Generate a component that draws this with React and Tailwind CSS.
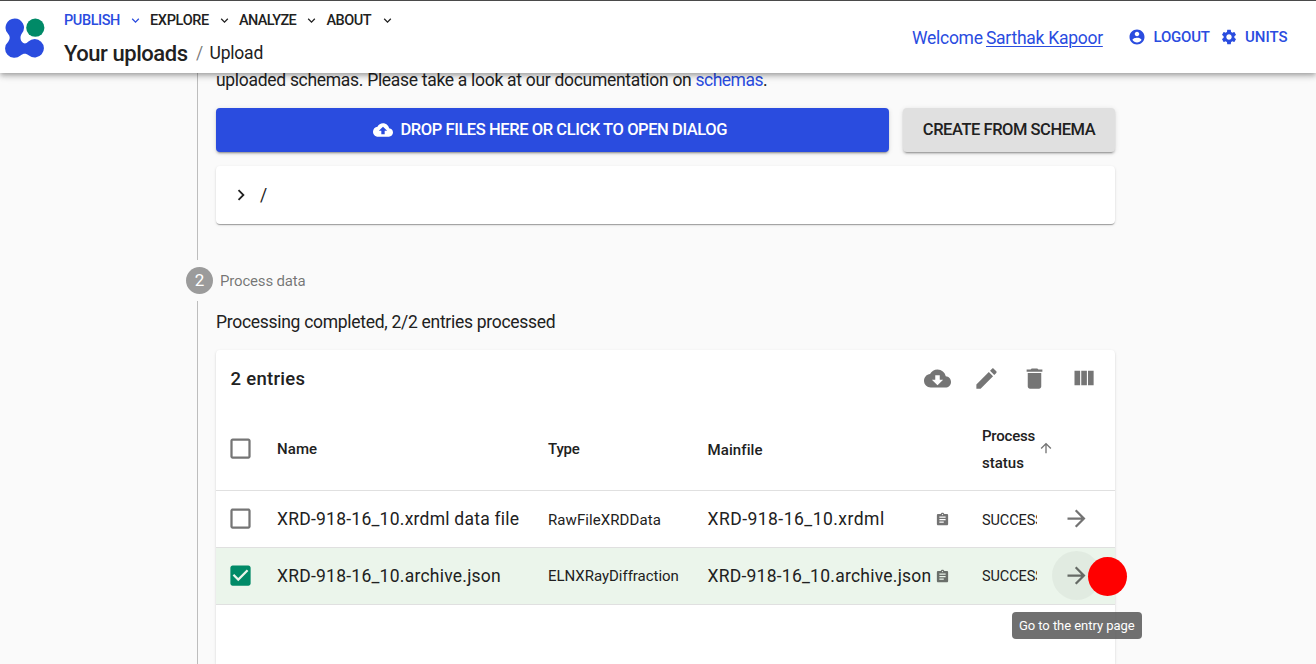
import React from "react";

const PATHS = {
  cloudUpload:
    "M19.35 10.04C18.67 6.59 15.64 4 12 4 9.11 4 6.6 5.64 5.35 8.04 2.34 8.36 0 10.91 0 14c0 3.31 2.69 6 6 6h13c2.76 0 5-2.24 5-5 0-2.64-2.05-4.78-4.65-4.96zM14 13v4h-4v-4H7l5-5 5 5h-3z",
  cloudDownload:
    "M19.35 10.04C18.67 6.59 15.64 4 12 4 9.11 4 6.6 5.64 5.35 8.04 2.34 8.36 0 10.91 0 14c0 3.31 2.69 6 6 6h13c2.76 0 5-2.24 5-5 0-2.64-2.05-4.78-4.65-4.96zM17 13l-5 5-5-5h3V9h4v4h3z",
  edit: "M3 17.25V21h3.75L17.81 9.94l-3.75-3.75L3 17.25zM20.71 7.04c.39-.39.39-1.02 0-1.41l-2.34-2.34c-.39-.39-1.02-.39-1.41 0l-1.83 1.83 3.75 3.75 1.83-1.83z",
  remove: "M6 19c0 1.1.9 2 2 2h8c1.1 0 2-.9 2-2V7H6v12zM19 4h-3.5l-1-1h-5l-1 1H5v2h14V4z",
  columns: "M10 18h5V5h-5v13zm-6 0h5V5H4v13zM16 5v13h5V5h-5z",
  account:
    "M12 2C6.48 2 2 6.48 2 12s4.48 10 10 10 10-4.48 10-10S17.52 2 12 2zm0 3c1.66 0 3 1.34 3 3s-1.34 3-3 3-3-1.34-3-3 1.34-3 3-3zm0 14.2c-2.5 0-4.71-1.28-6-3.22.03-1.99 4-3.08 6-3.08 1.99 0 5.97 1.09 6 3.08-1.29 1.94-3.5 3.22-6 3.22z",
  settings:
    "M19.14 12.94c.04-.3.06-.61.06-.94 0-.32-.02-.64-.07-.94l2.03-1.58c.18-.14.23-.41.12-.61l-1.92-3.32c-.12-.22-.37-.29-.59-.22l-2.39.96c-.5-.38-1.03-.7-1.62-.94l-.36-2.54c-.04-.24-.24-.41-.48-.41h-3.84c-.24 0-.43.17-.47.41l-.36 2.54c-.59.24-1.13.57-1.62.94l-2.39-.96c-.22-.08-.47 0-.59.22L2.74 8.87c-.12.21-.08.47.12.61l2.03 1.58c-.05.3-.09.63-.09.94s.02.64.07.94l-2.03 1.58c-.18.14-.23.41-.12.61l1.92 3.32c.12.22.37.29.59.22l2.39-.96c.5.38 1.03.7 1.62.94l.36 2.54c.05.24.24.41.48.41h3.84c.24 0 .44-.17.47-.41l.36-2.54c.59-.24 1.13-.56 1.62-.94l2.39.96c.22.08.47 0 .59-.22l1.92-3.32c.12-.22.07-.47-.12-.61l-2.01-1.58zM12 15.6c-1.98 0-3.6-1.62-3.6-3.6s1.62-3.6 3.6-3.6 3.6 1.62 3.6 3.6-1.62 3.6-3.6 3.6z",
  assignment:
    "M19 3h-4.18C14.4 1.84 13.3 1 12 1c-1.3 0-2.4.84-2.82 2H5c-1.1 0-2 .9-2 2v14c0 1.1.9 2 2 2h14c1.1 0 2-.9 2-2V5c0-1.1-.9-2-2-2zm-7 0c.55 0 1 .45 1 1s-.45 1-1 1-1-.45-1-1 .45-1 1-1zm2 14H7v-2h7v2zm3-4H7v-2h10v2zm0-4H7V7h10v2z",
  arrowForward: "M12 4l-1.41 1.41L16.17 11H4v2h12.17l-5.58 5.59L12 20l8-8z",
  arrowUp: "M4 12l1.41 1.41L11 7.83V20h2V7.83l5.58 5.59L20 12l-8-8-8 8z",
  expand: "M16.59 8.59L12 13.17 7.41 8.59 6 10l6 6 6-6z",
  chevronRight: "M10 6L8.59 7.41 13.17 12l-4.58 4.59L10 18l6-6z",
  box: "M19 5v14H5V5h14m0-2H5c-1.1 0-2 .9-2 2v14c0 1.1.9 2 2 2h14c1.1 0 2-.9 2-2V5c0-1.1-.9-2-2-2z",
  boxChecked:
    "M19 3H5c-1.11 0-2 .9-2 2v14c0 1.1.89 2 2 2h14c1.11 0 2-.9 2-2V5c0-1.1-.89-2-2-2zm-9 14l-5-5 1.41-1.41L10 14.17l7.59-7.59L19 8l-9 9z",
};

function Icon({ name, className }) {
  return (
    <svg viewBox="0 0 24 24" fill="currentColor" className={"shrink-0 " + className}>
      <path d={PATHS[name]} />
    </svg>
  );
}

function Logo() {
  return (
    <svg viewBox="0 0 40 40" className="h-10 w-10 shrink-0">
      <path
        fill="#2A4CDF"
        d="M9.7 .4A9.2 9.2 0 0 1 17 15.2C15.2 17.6 14.8 21.5 17 23.8C18.6 25.9 21 26.2 23.4 23.6A9.2 9.2 0 1 1 24 37.5C21 35.2 18.5 35.2 15.5 37.5A9.2 9.2 0 0 1 3.2 23.7C5.2 20.5 5.2 18.5 3.2 16A9.2 9.2 0 0 1 9.7 .4z"
      />
      <circle cx="30.3" cy="9.7" r="9.1" fill="#008A67" />
    </svg>
  );
}

function NavItem({ label, className }) {
  return (
    <div className={"flex items-center justify-between " + className}>
      <span>{label}</span>
      <Icon name="expand" className="h-[15px] w-[15px]" />
    </div>
  );
}

function Header() {
  return (
    <header className="relative z-10 flex h-[73px] items-center border-t border-[#4a4a4a] bg-white pl-[5px] pr-[29px] shadow-[0_2px_4px_-1px_rgba(0,0,0,0.2),0_4px_5px_0_rgba(0,0,0,0.14),0_1px_10px_0_rgba(0,0,0,0.12)]">
      <div className="mt-px">
        <Logo />
      </div>
      <div className="ml-[19px] flex h-full flex-col">
        <nav className="flex h-[38px] items-center pt-px text-[14.5px] font-medium">
          <NavItem label="PUBLISH" className="mr-[7px] w-[79px] tracking-[-0.42px] text-[#2A4CDF]" />
          <NavItem label="EXPLORE" className="mr-[7px] w-[82px] tracking-[-0.33px]" />
          <NavItem label="ANALYZE" className="mr-2 w-[79.5px] tracking-[-0.62px]" />
          <NavItem label="ABOUT" className="w-[68px] tracking-[-0.5px]" />
        </nav>
        <div className="flex h-[29px] items-center">
          <span className="w-[132px] text-[22px] font-medium tracking-[-0.45px]">Your uploads</span>
          <span className="w-[13.5px] text-[17.5px] text-black/55">/</span>
          <span className="text-[17.5px] tracking-[-0.2px]">Upload</span>
        </div>
      </div>
      <div className="ml-auto flex items-center text-[#2A4CDF]">
        <div className="mr-[25px] mt-0.5 flex gap-1 text-[17.5px] tracking-[-0.27px]">
          <span className="w-[70px]">Welcome</span>
          <span className="w-[117px] underline decoration-1 underline-offset-2">Sarthak Kapoor</span>
        </div>
        <div className="flex items-center text-[15px] font-medium">
          <Icon name="account" className="h-[18px] w-[18px]" />
          <span className="ml-[7.5px] w-[66px] tracking-[-0.2px]">LOGOUT</span>
          <Icon name="settings" className="h-[18px] w-[18px]" />
          <span className="ml-[7.5px] w-[42px]">UNITS</span>
        </div>
      </div>
    </header>
  );
}

const COLS = "grid grid-cols-[61px_271px_159.5px_229px_45.5px_55px_1fr] items-center";

function Row({ name, nameCls, type, typeCls, file, fileCls, statusCls, selected }) {
  return (
    <div className={COLS + " h-[57px] border-b border-[#e0e0e0] " + (selected ? "bg-[#ebf5eb]" : "bg-white")}>
      <Icon
        name={selected ? "boxChecked" : "box"}
        className={"-mt-px ml-[11px] h-[27px] w-[27px] " + (selected ? "text-[#008A67]" : "text-[#757575]")}
      />
      <span className={"text-[17.5px] " + nameCls}>{name}</span>
      <span className={"text-[15px] " + typeCls}>{type}</span>
      <span className={"text-[17.5px] " + fileCls}>{file}</span>
      <Icon name="assignment" className="-ml-[2px] mt-px h-[15px] w-[15px] text-black/55" />
      <span className={"overflow-hidden text-[14.5px] tracking-[-0.1px] " + statusCls}>SUCCESS</span>
      <span
        className={
          "-mt-px ml-[15px] flex h-[49px] w-[49px] items-center justify-center rounded-full text-black/55 " +
          (selected ? "bg-black/[0.04]" : "")
        }
      >
        <Icon name="arrowForward" className="h-[27px] w-[27px]" />
      </span>
    </div>
  );
}

const ELEVATION =
  "shadow-[0_2px_1px_-1px_rgba(0,0,0,0.2),0_1px_1px_0_rgba(0,0,0,0.14),0_1px_3px_0_rgba(0,0,0,0.12)]";
const RAISED =
  "shadow-[0_3px_1px_-2px_rgba(0,0,0,0.2),0_2px_2px_0_rgba(0,0,0,0.14),0_1px_5px_0_rgba(0,0,0,0.12)]";

export default function App() {
  return (
    <div className="relative flex h-[664px] w-[1316px] flex-col overflow-hidden whitespace-nowrap bg-[#fafafa] font-['Roboto',sans-serif] text-[#212121]">
      <Header />
      <main className="flex min-h-0 flex-1 flex-col">
        <section className="ml-[197px] h-[187px] w-[918px] shrink-0 border-l border-[#bdbdbd] pl-[18px]">
          <p className="-mt-[6px] h-[27px] text-[17.5px] leading-[27px] tracking-[-0.3px]">
            uploaded schemas. Please take a look at our documentation on{" "}
            <span className="tracking-[-0.5px] text-[#2A4CDF]">schemas</span>.
          </p>
          <div className="mt-[14px] flex gap-3.5">
            <button
              className={
                "flex h-11 w-[673px] items-center justify-center gap-[7.5px] rounded-[4px] bg-[#2A4CDF] pr-[5px] text-[16.5px] font-medium tracking-[-0.42px] text-white " +
                RAISED
              }
            >
              <Icon name="cloudUpload" className="h-5 w-5" />
              DROP FILES HERE OR CLICK TO OPEN DIALOG
            </button>
            <button
              className={
                "h-11 w-[212px] rounded-[4px] bg-[#e0e0e0] text-[16.5px] font-medium tracking-[-0.46px] " + RAISED
              }
            >
              CREATE FROM SCHEMA
            </button>
          </div>
          <div className={"mt-3.5 flex h-[58px] items-center rounded-[4px] bg-white pl-[13.5px] " + ELEVATION}>
            <Icon name="chevronRight" className="h-[22px] w-[22px]" />
            <span className="ml-[8.5px] text-[17.5px]">/</span>
          </div>
        </section>

        <div className="my-[7px] ml-[186px] flex h-[27px] shrink-0 items-center">
          <span className="flex h-[27px] w-[27px] items-center justify-center rounded-full bg-[#9b9b9b] text-[17px] text-white">
            2
          </span>
          <span className="ml-[7px] mt-px text-[15px] tracking-[-0.18px] text-black/55">Process data</span>
        </div>

        <section className="ml-[197px] flex w-[918px] flex-1 flex-col border-l border-[#bdbdbd] pl-[18px]">
          <p className="mt-[8px] h-[27px] text-[17.5px] leading-[27px] tracking-[-0.29px]">
            Processing completed, 2/2 entries processed
          </p>
          <div className={"mt-3.5 flex flex-1 flex-col rounded-t-[4px] bg-white " + ELEVATION}>
            <div className="flex h-[57px] items-center justify-between pl-[14.5px] pr-[18px]">
              <h2 className="mt-[3px] text-[18.5px] font-medium tracking-[0.3px]">2 entries</h2>
              <div className="flex gap-[21.7px] text-[#757575]">
                <Icon name="cloudDownload" className="h-[27px] w-[27px]" />
                <Icon name="edit" className="h-[27px] w-[27px]" />
                <Icon name="remove" className="h-[27px] w-[27px]" />
                <Icon name="columns" className="h-[27px] w-[27px]" />
              </div>
            </div>
            <div className={COLS + " h-[84px] border-b border-[#e0e0e0] text-[15px] font-medium"}>
              <Icon name="box" className="ml-[11px] h-[27px] w-[27px] text-[#757575]" />
              <span className="mt-0.5 tracking-[0.1px]">Name</span>
              <span className="mt-0.5 tracking-[-0.2px]">Type</span>
              <span className="mt-1 tracking-[0.1px]">Mainfile</span>
              <span />
              <span className="mt-0.5 leading-[27px] tracking-[-0.2px]">
                Process
                <br />
                <span className="tracking-normal">status</span>
              </span>
              <Icon name="arrowUp" className="-mt-px ml-[1px] h-4 w-4 text-black/55" />
            </div>
            <Row
              name="XRD-918-16_10.xrdml data file"
              nameCls="tracking-[0.24px]"
              type="RawFileXRDData"
              typeCls="mt-[3px] tracking-[0.08px]"
              file="XRD-918-16_10.xrdml"
              fileCls="tracking-[0.47px]"
              statusCls="mt-[3px]"
            />
            <Row
              name="XRD-918-16_10.archive.json"
              nameCls="tracking-[0.24px]"
              type="ELNXRayDiffraction"
              typeCls="tracking-[-0.03px]"
              file="XRD-918-16_10.archive.json"
              fileCls="tracking-[0.24px]"
              statusCls="mt-px"
              selected
            />
          </div>
        </section>
      </main>

      <div className="absolute left-[1088px] top-[557px] h-[39px] w-[39px] rounded-full bg-[#ff0000]" />
      <div className="absolute left-[1012px] top-[612px] flex h-[26.5px] w-[129.5px] items-center justify-center rounded-[4px] bg-[#616161]/90 text-[13px] tracking-[-0.05px] text-white">
        Go to the entry page
      </div>
    </div>
  );
}
